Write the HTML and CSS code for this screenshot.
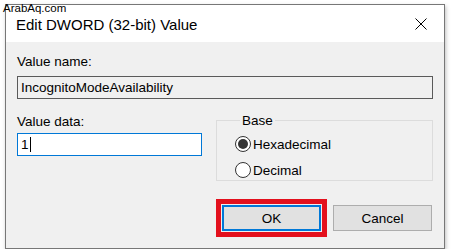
FILE: index.html
```html
<!DOCTYPE html>
<html lang="en">

<head>
  <meta charset="UTF-8">
  <meta name="viewport" content="width=device-width, initial-scale=1.0">
  <title>Edit DWORD (32-bit) Value</title>
  <link rel="stylesheet" href="styles.css">
</head>

<body>
  <span class="watermark">ArabAq.com</span>

  <div class="window">
    <div class="titlebar">
      <span class="title">Edit DWORD (32-bit) Value</span>
      <svg class="close" width="12" height="12" viewBox="0 0 12 12">
        <path d="M0.5 0.5 L11.5 11.5 M11.5 0.5 L0.5 11.5" stroke="#000" stroke-width="1" fill="none" />
      </svg>
    </div>

    <div class="content">
      <label class="label">Value name:</label>
      <div class="name-box">IncognitoModeAvailability</div>

      <div class="row">
        <div class="data-col">
          <label class="label">Value data:</label>
          <div class="data-box">1<span class="caret"></span></div>
        </div>

        <fieldset class="base">
          <legend>Base</legend>
          <div class="radio-row">
            <span class="radio checked"></span>
            <span>Hexadecimal</span>
          </div>
          <div class="radio-row">
            <span class="radio"></span>
            <span>Decimal</span>
          </div>
        </fieldset>
      </div>

      <div class="buttons">
        <button class="btn ok">OK</button>
        <button class="btn">Cancel</button>
      </div>
    </div>
  </div>
</body>

</html>
```

FILE: styles.css
```css
body {
  margin: 0;
  padding: 4px 0 0 5px;
  background: #fff;
  font-family: "Liberation Sans", Arial, sans-serif;
  font-size: 13.5px;
  color: #000;
}

.watermark {
  position: absolute;
  left: 3px;
  top: 2px;
  font-size: 11.5px;
  color: #000;
  z-index: 2;
}

.window {
  width: 438px;
  height: 243px;
  border: 1px solid #777;
  background: #f0f0f0;
  box-shadow: 1px 2px 4px rgba(0, 0, 0, 0.25);
  display: flex;
  flex-direction: column;
}

.titlebar {
  height: 37px;
  background: #fff;
  display: flex;
  align-items: center;
  justify-content: space-between;
  padding: 0 17px 0 10px;
}

.title {
  font-size: 15px;
  margin-top: 1px;
}

.content {
  padding: 12px 11px 0 11px;
  display: flex;
  flex-direction: column;
}

.label {
  display: block;
  line-height: 16px;
}

.name-box {
  margin-top: 6px;
  height: 21px;
  line-height: 21px;
  border: 1px solid #5a5a5a;
  padding: 0 3px;
  background: #f0f0f0;
}

.row {
  display: flex;
  justify-content: space-between;
  margin-top: 14px;
}

.data-col {
  padding-top: 1px;
}

.data-col .label {
  margin-bottom: 3px;
}

.data-box {
  width: 177px;
  height: 21px;
  line-height: 21px;
  border: 1px solid #0078d7;
  background: #fff;
  padding: 0 3px;
  display: flex;
  align-items: center;
}

.caret {
  display: inline-block;
  width: 1px;
  height: 15px;
  background: #000;
  margin-left: 1px;
}

.base {
  width: 217px;
  height: 68px;
  box-sizing: border-box;
  margin: 0;
  border: 1px solid #dcdcdc;
  padding: 3px 0 0 18px;
}

.base legend {
  padding: 0 2px;
  margin-left: 5px;
}

.radio-row {
  display: flex;
  align-items: center;
  gap: 2px;
  height: 26px;
}

.radio {
  width: 16px;
  height: 16px;
  box-sizing: border-box;
  border: 1px solid #333;
  border-radius: 50%;
  background: #fff;
  display: flex;
  align-items: center;
  justify-content: center;
}

.radio.checked::after {
  content: "";
  width: 10px;
  height: 10px;
  border-radius: 50%;
  background: #333;
}

.buttons {
  display: flex;
  justify-content: flex-end;
  gap: 12px;
  margin: 24px 1px 0 0;
}

.btn {
  width: 99px;
  height: 26px;
  box-sizing: border-box;
  border: 1px solid #adadad;
  background: #e1e1e1;
  font-family: "Liberation Sans", Arial, sans-serif;
  font-size: 13.5px;
  color: #000;
  padding: 0;
}

.btn.ok {
  border: 2px solid #0078d7;
  outline: 5px solid #e3101d;
  outline-offset: 1px;
}
```
